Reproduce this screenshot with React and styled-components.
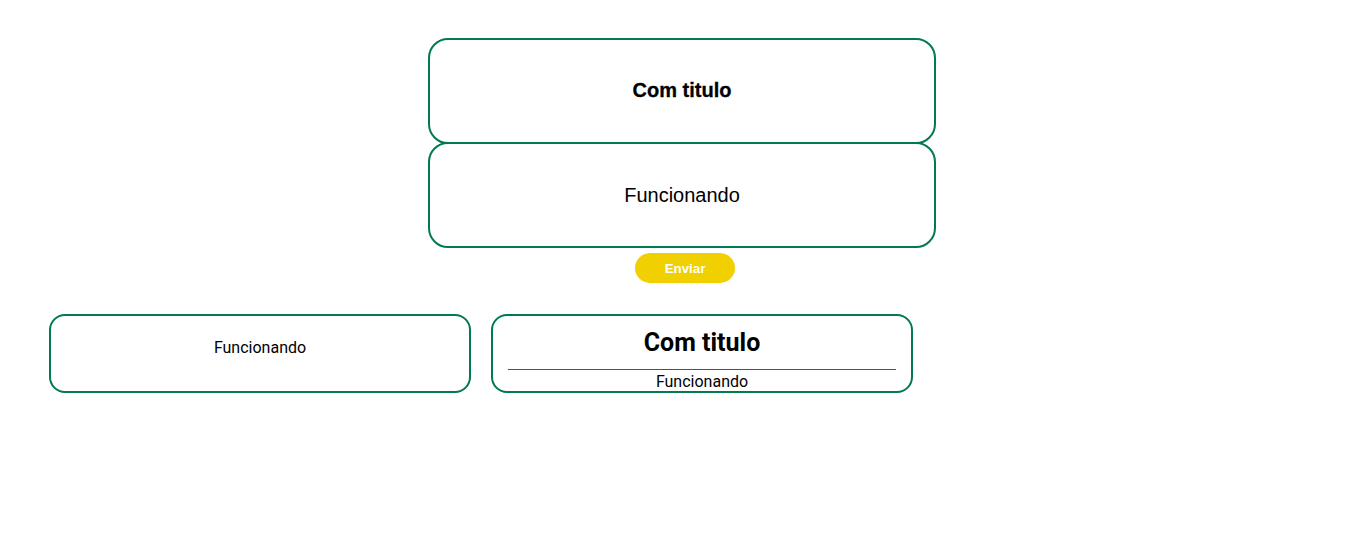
import styled, { createGlobalStyle } from "styled-components";

const GlobalStyle = createGlobalStyle`
  body {
    margin: 0;
    background: #ffffff;
    font-family: "Liberation Sans", Arial, sans-serif;
    color: #000;
  }
`;

const App = () => {
  return (
    <>
      <GlobalStyle />
      <Page>
        <Stack>
          <BigCard>
            <BigTitle>Com titulo</BigTitle>
          </BigCard>
          <BigCard $below>
            <BigText>Funcionando</BigText>
          </BigCard>
          <SendButton>Enviar</SendButton>
        </Stack>
        <Row>
          <SmallCard>
            <SmallText>Funcionando</SmallText>
          </SmallCard>
          <SmallCard $titled>
            <SmallTitle>Com titulo</SmallTitle>
            <Divider />
            <SmallText>Funcionando</SmallText>
          </SmallCard>
        </Row>
      </Page>
    </>
  );
};

export default App;

const Page = styled.div`
  display: flex;
  flex-direction: column;
  padding-top: 38px;
`;

const Stack = styled.div`
  display: flex;
  flex-direction: column;
  align-items: center;
  padding-right: 1px;
`;

const BigCard = styled.div`
  box-sizing: border-box;
  width: 508px;
  height: 106px;
  margin-top: ${(p) => (p.$below ? "-2px" : "0")};
  background: #ffffff;
  border: 2px solid #007a4e;
  border-radius: 20px;
  display: flex;
  align-items: center;
  justify-content: center;
`;

const BigTitle = styled.h2`
  margin: 0 0 2px;
  font-size: 20px;
  font-weight: bold;
  -webkit-text-stroke: 0.3px #000;
`;

const BigText = styled.span`
  font-size: 20px;
`;

const SendButton = styled.button`
  margin-top: 5px;
  margin-left: 6px;
  width: 100px;
  height: 30px;
  border: none;
  border-radius: 15px;
  background-color: #f0d000;
  color: #ffffff;
  font-family: "Liberation Sans", Arial, sans-serif;
  font-weight: bold;
  font-size: 13.33px;
  cursor: pointer;
`;

const Row = styled.div`
  display: flex;
  gap: 20px;
  margin-top: 31px;
  padding-left: 49px;
`;

const SmallCard = styled.div`
  box-sizing: border-box;
  width: 422px;
  height: 79px;
  border: 2px solid #007a4e;
  border-radius: 16px;
  display: flex;
  flex-direction: column;
  align-items: center;
  padding: ${(p) => (p.$titled ? "12px 15px 0" : "22px 15px 0")};
  font-family: Roboto, "Liberation Sans", sans-serif;
`;

const SmallTitle = styled.h3`
  margin: 0;
  font-size: 25px;
  line-height: 30px;
  font-weight: bold;
`;

const Divider = styled.hr`
  width: 100%;
  margin: 11px 0 2px;
  border: none;
  border-top: 1px solid #007a4e;
`;

const SmallText = styled.span`
  font-size: 16px;
  line-height: 20px;
`;
